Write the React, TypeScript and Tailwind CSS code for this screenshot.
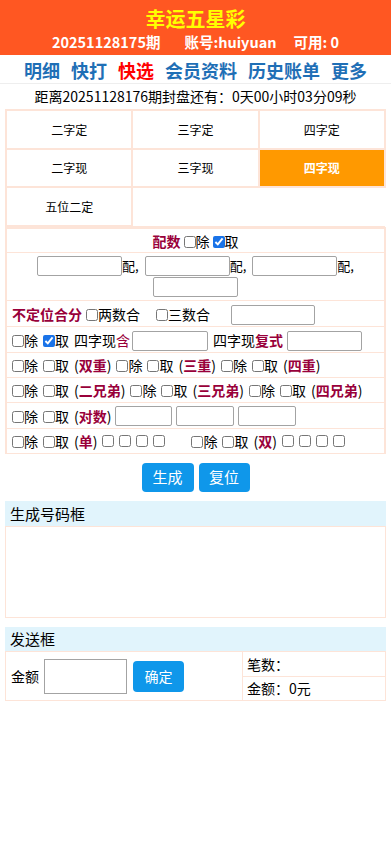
import React from "react";

const font = { fontFamily: '"Noto Sans CJK SC", "Liberation Sans", sans-serif' };

function Cb({ checked = false }: { checked?: boolean }) {
  return (
    <input
      type="checkbox"
      defaultChecked={checked}
      className="w-[12px] h-[12px] align-[-1px] accent-[#1a73e8]"
    />
  );
}

function Red({ children }: { children: React.ReactNode }) {
  return <span className="text-[#99003a] font-bold">{children}</span>;
}

function Box({ w }: { w: string }) {
  return (
    <input
      type="text"
      className={`${w} h-[20px] border border-[#a3a3a3] rounded-[2px] align-middle bg-white`}
    />
  );
}

const Row = ({ children, className = "" }: { children: React.ReactNode; className?: string }) => (
  <div className={`border-b border-[#fde4d8] px-[5px] ${className}`}>{children}</div>
);

export default function App() {
  const types = [
    ["二字定", "三字定", "四字定"],
    ["二字现", "三字现", "四字现"],
    ["五位二定", "", ""],
  ];

  return (
    <div className="w-[391px] min-h-[846px] bg-white text-black" style={font}>
      {/* header */}
      <div className="h-[55px] bg-[#ff5722] flex flex-col items-center pt-[5px]">
        <div className="text-[20px] leading-[28px] font-bold text-[#ffff00]">幸运五星彩</div>
        <div className="text-[14.5px] leading-[18px] font-bold text-white flex">
          <span>20251128175期</span>
          <span className="ml-[24px]">账号:huiyuan</span>
          <span className="ml-[17px]">可用: 0</span>
        </div>
      </div>

      {/* nav */}
      <div className="h-[29px] pt-[3px] flex justify-center items-center gap-[11px] text-[18px] font-bold text-[#1f6fb6] border-b border-[#eeeeee]">
        <span>明细</span>
        <span>快打</span>
        <span className="text-[#ff0000]">快选</span>
        <span>会员资料</span>
        <span>历史账单</span>
        <span>更多</span>
      </div>

      <div className="h-[25px] flex justify-center items-center text-[14px]">
        距离20251128176期封盘还有：0天00小时03分09秒
      </div>

      <div className="px-[5px]">
        {/* play types */}
        <table className="w-full border-collapse table-fixed">
          <tbody>
            {types.map((r, i) => (
              <tr key={i} className={i === 1 ? "h-[38px]" : "h-[39px]"}>
                {r.map((t, j) =>
                  t === "" && j === 2 ? null : t === "" ? (
                    <td key={j} colSpan={2} className="border-l border-[#fde4d8] border-b"></td>
                  ) : (
                    <td
                      key={j}
                      className={`border-2 border-[#fde4d8] text-center text-[12px] ${
                        t === "四字现" ? "bg-[#ff9900] text-white font-bold" : ""
                      }`}
                    >
                      {t}
                    </td>
                  )
                )}
              </tr>
            ))}
          </tbody>
        </table>

        {/* options */}
        <div className="border-l-2 border-r-2 border-[#fde4d8] text-[14px] leading-[20px]">
          <Row className="h-[26px] flex items-center justify-center gap-[3px] border-t-2">
            <Red>配数</Red>
            <span>
              <Cb />除
            </span>
            <span>
              <Cb checked />取
            </span>
          </Row>
          <Row className="h-[48px] flex flex-wrap justify-center content-center gap-y-[1px] gap-x-[6px]">
            {[0, 1, 2].map((k) => (
              <span key={k} className="flex items-center">
                <Box w="w-[85px]" />
                <span className="text-[13px]">配,</span>
              </span>
            ))}
            <span className="w-full flex justify-center">
              <Box w="w-[85px]" />
            </span>
          </Row>
          <Row className="h-[26px] flex items-center">
            <Red>不定位合分</Red>
            <span className="ml-[4px]">
              <Cb />两数合
            </span>
            <span className="ml-[16px]">
              <Cb />三数合
            </span>
            <span className="ml-[21px]">
              <Box w="w-[84px]" />
            </span>
          </Row>
          <Row className="h-[26px] flex items-center">
            <span>
              <Cb />除
            </span>
            <span className="ml-[5px]">
              <Cb checked />取
            </span>
            <span className="ml-[5px]">
              四字现<span className="text-[#99003a]">含</span>
            </span>
            <span className="ml-[2px]">
              <Box w="w-[76px]" />
            </span>
            <span className="ml-[5px]">
              四字现<Red>复式</Red>
            </span>
            <span className="ml-[4px]">
              <Box w="w-[75px]" />
            </span>
          </Row>
          {[
            ["双重", "三重", "四重"],
            ["二兄弟", "三兄弟", "四兄弟"],
          ].map((grp, gi) => (
            <Row key={gi} className="h-[25px] flex items-center gap-[5px]">
              {grp.map((g) => (
                <React.Fragment key={g}>
                  <span>
                    <Cb />除
                  </span>
                  <span>
                    <Cb />取
                  </span>
                  <span>
                    (<Red>{g}</Red>)
                  </span>
                </React.Fragment>
              ))}
            </Row>
          ))}
          <Row className="h-[26px] flex items-center gap-[4px]">
            <span>
              <Cb />除
            </span>
            <span className="ml-[1px]">
              <Cb />取
            </span>
            <span className="ml-[1px]">
              (<Red>对数</Red>)
            </span>
            <Box w="w-[57px]" />
            <Box w="w-[58px]" />
            <Box w="w-[58px]" />
          </Row>
          <Row className="h-[25px] flex items-center gap-[5px]">
            <span>
              <Cb />除
            </span>
            <span>
              <Cb />取
            </span>
            <span>
              (<Red>单</Red>)
            </span>
            <span className="flex gap-[5px]">
              <Cb />
              <Cb />
              <Cb />
              <Cb />
            </span>
            <span className="ml-[21px]">
              <Cb />除
            </span>
            <span>
              <Cb />取
            </span>
            <span>
              (<Red>双</Red>)
            </span>
            <span className="flex gap-[5px]">
              <Cb />
              <Cb />
              <Cb />
              <Cb />
            </span>
          </Row>
        </div>

        {/* buttons */}
        <div className="flex justify-center gap-[5px] mt-[9px]">
          <button className="w-[52px] h-[29px] rounded-[4px] bg-[#0f97ea] text-white text-[15px]">生成</button>
          <button className="w-[51px] h-[29px] rounded-[4px] bg-[#0f97ea] text-white text-[15px]">复位</button>
        </div>

        {/* generated */}
        <div className="mt-[9px] h-[25px] bg-[#e1f4fc] text-[15px] leading-[25px] pl-[5px]">生成号码框</div>
        <div className="h-[92px] border border-[#fde4d8]"></div>

        {/* send */}
        <div className="mt-[9px] h-[24px] bg-[#e1f4fc] text-[15px] leading-[24px] pl-[5px]">发送框</div>
        <div className="flex border border-[#fde4d8] h-[50px] text-[14px]">
          <div className="w-[237px] flex items-center border-r border-[#fde4d8] pl-[5px]">
            <span>金额</span>
            <input
              type="text"
              className="ml-[5px] w-[83px] h-[35px] border border-[#a3a3a3] bg-white"
            />
            <button className="ml-[6px] w-[51px] h-[31px] rounded-[4px] bg-[#0f97ea] text-white text-[14px]">
              确定
            </button>
          </div>
          <div className="flex-1 flex flex-col">
            <div className="h-[25px] flex items-center pl-[4px] border-b border-[#fde4d8]">笔数：</div>
            <div className="flex-1 flex items-center pl-[4px]">金额：0元</div>
          </div>
        </div>
      </div>
    </div>
  );
}
